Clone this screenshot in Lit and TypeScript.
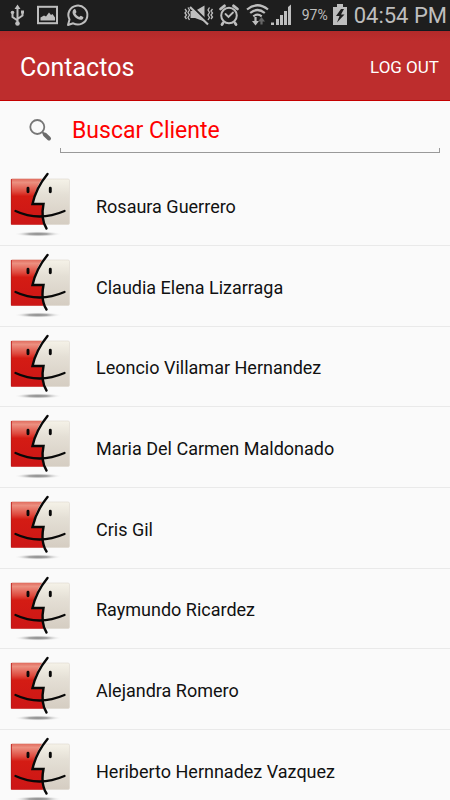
import { LitElement, html, css } from "lit";
import { customElement, property } from "lit/decorators.js";

const CONTACTS = [
  "Rosaura Guerrero",
  "Claudia Elena Lizarraga",
  "Leoncio Villamar Hernandez",
  "Maria Del Carmen Maldonado",
  "Cris Gil",
  "Raymundo Ricardez",
  "Alejandra Romero",
  "Heriberto Hernnadez Vazquez",
];

@customElement("status-bar")
class StatusBar extends LitElement {
  static styles = css`
    :host {
      display: flex;
      align-items: center;
      justify-content: space-between;
      height: 30px;
      flex: none;
      padding: 0 3px 0 8px;
      background: #1e1e1e;
      border-bottom: 1px solid #10191e;
      color: #bebebe;
      box-sizing: content-box;
    }
    .group {
      display: flex;
      align-items: center;
    }
    .left {
      gap: 8px;
    }
    svg {
      display: block;
      flex: none;
    }
    .alarm {
      margin-left: 4px;
    }
    .wifi {
      margin-left: 6px;
    }
    .battery {
      margin-left: 4px;
    }
    .percent {
      font-size: 14px;
      margin-left: 8px;
    }
    .clock {
      font-size: 22px;
      margin-left: 6px;
    }
  `;

  render() {
    return html`
      <div class="group left">
        <svg width="20" height="24" viewBox="0 0 20 24" fill="none" stroke="#bebebe" stroke-width="2">
          <path d="M9.5 4V21M4.500 11V14L9.500 17.500M14.500 10V12.500L9.500 16" />
          <path d="M9.500 1.500L12.500 6H6.500ZM13 7.500H16V10.500H13Z" fill="#bebebe" stroke="none" />
          <circle cx="4.500" cy="9.500" r="1.800" fill="#bebebe" stroke="none" />
          <circle cx="9.500" cy="20.500" r="2.300" fill="#bebebe" stroke="none" />
        </svg>
        <svg width="22" height="24" viewBox="0 0 22 24">
          <rect x="2" y="3.800" width="19" height="16.400" fill="none" stroke="#bebebe" stroke-width="2" />
          <path d="M4.500 17.500V14.500L8 12.500L10 13.500L13 9.500L15 12L16.500 11L19 14.500V17.500Z" fill="#bebebe" />
        </svg>
        <svg width="24" height="24" viewBox="0 0 24 24">
          <path
            d="M2 22L3.500 16.500A9.500 9.500 0 1 1 7.200 20.300Z"
            fill="none"
            stroke="#bebebe"
            stroke-width="2"
            stroke-linejoin="round"
          />
          <path
            d="M8.100 6.200C9 5.700 9.400 6.100 9.700 6.900L10.400 8.700C10.600 9.300 9.700 10 9.400 10.500C10.200 12.100 11.400 13.200 13.200 14C13.700 13.700 14.300 12.700 14.900 12.700L17.200 13.900C17.700 14.300 17.200 15.700 16.600 16.200C15.200 17.200 13.200 16.700 11.300 15.700C9.100 14.500 7.600 12.700 6.800 10.700C6.200 9.100 6.700 7.100 8.100 6.200Z"
            fill="#bebebe"
          />
        </svg>
      </div>
      <div class="group">
        <svg width="30" height="24" viewBox="0 0 30 24" fill="none" stroke="#bebebe">
          <path d="M6.500 8H11L20.500 2.500V18.500L11 15H6.500Z" fill="#bebebe" stroke="none" />
          <path d="M7 2.500L25 20" stroke="#1e1e1e" stroke-width="2.400" />
          <path d="M6 4L24 21.500" stroke-width="2.200" />
          <path
            d="M1 6L2.500 8L1 10L2.500 12L1 14L2.500 16M4 4.500L5.500 7L4 9.500L5.500 12L4 14.500L5.500 17M28.500 6L27 8L28.500 10L27 12L28.500 14L27 16M25.500 4.500L24 7L25.500 9.500L24 12L25.500 14.500L24 17"
            stroke-width="1.300"
          />
        </svg>
        <svg class="alarm" width="22" height="24" viewBox="0 0 22 24" fill="none" stroke="#bebebe" stroke-linecap="round">
          <circle cx="11" cy="12.500" r="7.800" stroke-width="2" />
          <path d="M7.500 11L10.500 14L15 9.500" stroke-width="1.800" />
          <path d="M2.500 6L6.500 2.800M19.500 6L15.500 2.800M5 20L4 21.500M17 20L18 21.500" stroke-width="2.800" />
        </svg>
        <svg class="wifi" width="24" height="24" viewBox="0 0 24 24" fill="none" stroke="#bebebe" stroke-width="2.200">
          <path d="M1 6.500Q11.500 -2 22 6.500M4.200 10Q11.500 4 18.800 10M7.300 13.300Q11.500 10 15.700 13.300" />
          <path d="M9.500 14V19" />
          <path d="M6 18H13L9.500 22.500Z" fill="#bebebe" stroke="none" />
          <path d="M15.500 21.500V17" stroke="#666" />
          <path d="M12 18.500L15.500 14L19 18.500Z" fill="#666" stroke="none" />
        </svg>
        <svg width="24" height="24" viewBox="0 0 24 24" fill="#bebebe">
          <path d="M1 19.500H4V22H1ZM6 16H9V22H6ZM10 12H13V22H10ZM14 8H17V22H14ZM18 4L21 1.500V22H18Z" />
        </svg>
        <span class="percent">97%</span>
        <svg class="battery" width="16" height="24" viewBox="0 0 16 24">
          <path d="M5 1H11V4H15V22H1V4H5Z" fill="#bebebe" />
          <path d="M9 6L4 13H7.500L5 19.500L12.500 11.500H9L12 6Z" fill="#1e1e1e" />
        </svg>
        <span class="clock">04:54 PM</span>
      </div>
    `;
  }
}

@customElement("contact-row")
class ContactRow extends LitElement {
  @property() name = "";

  static styles = css`
    :host {
      display: flex;
      align-items: center;
      height: 100%;
      box-sizing: border-box;
      gap: 25px;
      padding: 2px 0 0 9px;
      border-bottom: 1px solid #e9e9e9;
      font-size: 18px;
      color: #111;
    }
    svg {
      display: block;
      flex: none;
    }
  `;

  render() {
    return html`
      <svg width="62" height="72" viewBox="0 0 62 72" aria-hidden="true">
        <defs>
          <linearGradient id="red" x1="0" y1="0" x2="0" y2="1">
            <stop offset="0" stop-color="#e06a5c" />
            <stop offset="0.080" stop-color="#ec9080" />
            <stop offset="0.280" stop-color="#de4a3e" />
            <stop offset="0.380" stop-color="#d41c14" />
            <stop offset="1" stop-color="#cc1616" />
          </linearGradient>
          <linearGradient id="ivory" x1="0" y1="0" x2="0" y2="1">
            <stop offset="0" stop-color="#f5f2e8" />
            <stop offset="0.350" stop-color="#e4dfd5" />
            <stop offset="1" stop-color="#d5cdc2" />
          </linearGradient>
          <radialGradient id="shade">
            <stop offset="0" stop-color="#8a8a8a" />
            <stop offset="0.400" stop-color="#a8a8a8" />
            <stop offset="1" stop-color="#fafafa" stop-opacity="0" />
          </radialGradient>
        </defs>
        <ellipse cx="29" cy="64" rx="24" ry="2.800" fill="url(#shade)" />
        <rect x="2" y="9" width="58.500" height="45.500" rx="1.500" fill="url(#ivory)" stroke="#ddd7cd" stroke-width="0.600" />
        <path d="M3 8.700H33Q25 21 23.500 34H34.500Q32 45 34.500 54.800H3Q2 54.800 2 53.800V9.700Q2 8.700 3 8.700Z" fill="url(#red)" />
        <path d="M2.400 9V54.500" stroke="#b81818" stroke-width="0.800" />
        <g fill="none" stroke="#080808" stroke-linecap="round">
          <path d="M38.500 4Q27 18 23.500 34H34.500Q31.500 49 37.500 58.500" stroke-width="2.400" />
          <path d="M6.500 41Q30 52 55.500 41" stroke-width="2.300" />
          <path d="M19 18.300V21.700M41.300 18.300V21.700" stroke-width="2.900" />
        </g>
      </svg>
      <span>${this.name}</span>
    `;
  }
}

@customElement("app-root")
class AppRoot extends LitElement {
  static styles = css`
    :host {
      display: flex;
      flex-direction: column;
      height: 100vh;
      overflow: hidden;
      background: #fafafa;
      font-family: Roboto, "Noto Sans", sans-serif;
    }
    .toolbar {
      display: flex;
      align-items: center;
      justify-content: space-between;
      flex: none;
      height: 70px;
      box-sizing: border-box;
      padding: 3px 11px 0 20px;
      background: linear-gradient(#b22a2a, #bd2d2d 10px);
      border-bottom: 1px solid #c40000;
      color: #fff;
    }
    .title {
      margin: 0;
      font-size: 25px;
      font-weight: 400;
    }
    .logout {
      padding: 0;
      border: 0;
      background: none;
      color: inherit;
      font: inherit;
      font-size: 17px;
    }
    .search {
      display: flex;
      flex: none;
      height: 52px;
      padding: 0 10px 0 28px;
    }
    .search label {
      flex: none;
      width: 32px;
      padding-top: 16px;
    }
    .search svg {
      display: block;
    }
    .field {
      flex: 1;
      position: relative;
    }
    .field::after {
      content: "";
      position: absolute;
      inset: auto 0 0 0;
      height: 4px;
      border: 1px solid #999;
      border-top: 0;
    }
    input {
      display: block;
      width: 100%;
      height: 50px;
      box-sizing: border-box;
      padding: 8px 12px 0 12px;
      border: 0;
      outline: 0;
      background: none;
      font: inherit;
      font-size: 23px;
      color: #f00;
    }
    input::placeholder {
      color: #f00;
      opacity: 1;
    }
    ul {
      display: grid;
      grid-auto-rows: 81px 81px 80px;
      flex: 1;
      min-height: 0;
      margin: 0;
      padding: 12px 0 0;
      list-style: none;
      overflow-y: auto;
      scrollbar-width: none;
    }
  `;

  render() {
    return html`
      <status-bar></status-bar>
      <header class="toolbar">
        <h1 class="title">Contactos</h1>
        <button class="logout">LOG OUT</button>
      </header>
      <div class="search">
        <label for="query" aria-label="Buscar Cliente">
          <svg width="24" height="26" viewBox="0 0 24 26" fill="none">
            <circle cx="9.300" cy="10" r="7" stroke="#777" stroke-width="1.800" />
            <path d="M14.200 15L17 17.800" stroke="#777" stroke-width="2" />
            <path d="M16.800 17.500L21 21.500" stroke="#6b6b6b" stroke-width="4" stroke-linecap="round" />
          </svg>
        </label>
        <div class="field">
          <input id="query" type="text" placeholder="Buscar Cliente" />
        </div>
      </div>
      <ul>
        ${CONTACTS.map((name) => html`<li><contact-row .name=${name}></contact-row></li>`)}
      </ul>
    `;
  }
}
